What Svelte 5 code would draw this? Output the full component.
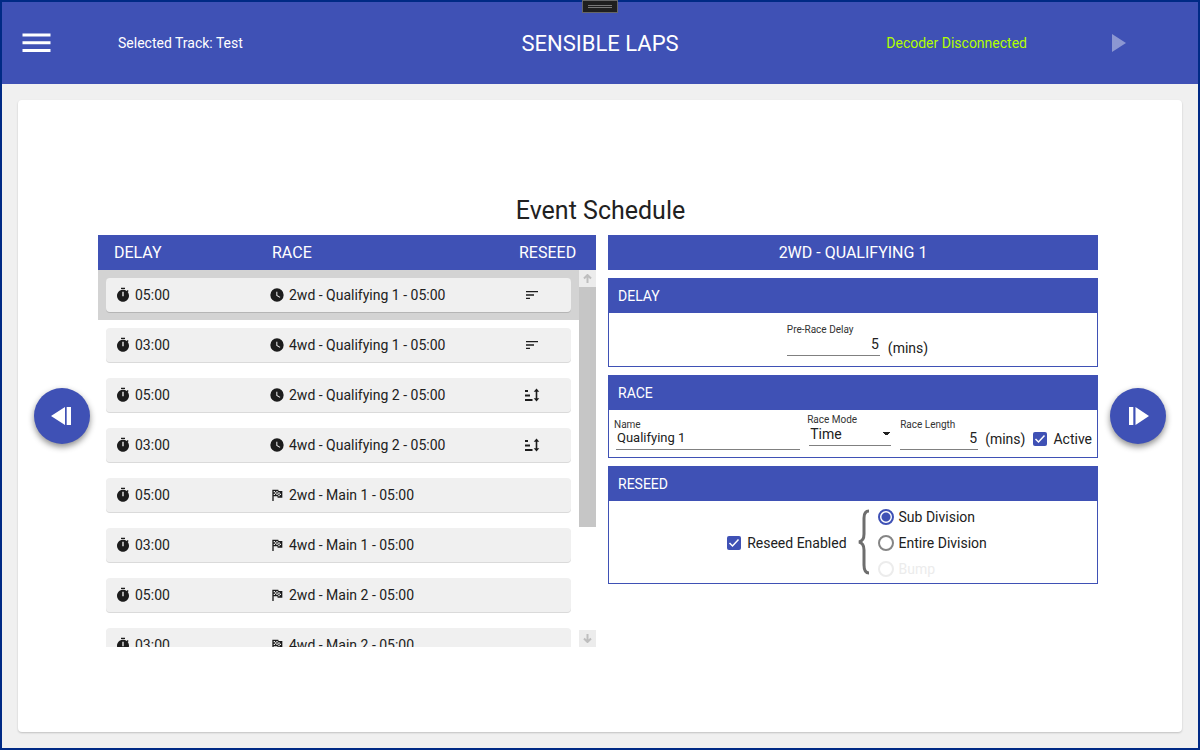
<script lang="ts">
  type Reseed = 'keep' | 'sort' | '';

  let races: { delay: string; icon: 'clock' | 'flag'; name: string; reseed: Reseed }[] = [
    { delay: '05:00', icon: 'clock', name: '2wd - Qualifying 1 - 05:00', reseed: 'keep' },
    { delay: '03:00', icon: 'clock', name: '4wd - Qualifying 1 - 05:00', reseed: 'keep' },
    { delay: '05:00', icon: 'clock', name: '2wd - Qualifying 2 - 05:00', reseed: 'sort' },
    { delay: '03:00', icon: 'clock', name: '4wd - Qualifying 2 - 05:00', reseed: 'sort' },
    { delay: '05:00', icon: 'flag', name: '2wd - Main 1 - 05:00', reseed: '' },
    { delay: '03:00', icon: 'flag', name: '4wd - Main 1 - 05:00', reseed: '' },
    { delay: '05:00', icon: 'flag', name: '2wd - Main 2 - 05:00', reseed: '' },
    { delay: '03:00', icon: 'flag', name: '4wd - Main 2 - 05:00', reseed: '' },
  ];

  let selected = 0;
  let preDelay = '5';
  let raceName = 'Qualifying 1';
  let mode = 'Time';
  let raceLength = '5';
  let active = true;
  let reseedEnabled = true;
  let reseedBy = 'sub';
  let tbody: HTMLElement;

  function scrollList(amount: number) {
    tbody.scrollBy({ top: amount, behavior: 'smooth' });
  }
</script>

<div class="window">
  <div class="grip"><span></span></div>

  <header>
    <div class="side">
      <button class="menu" aria-label="Menu">
        <svg viewBox="0 0 29 20" width="29" height="20" fill="#fff">
          <path d="M.5.5h28v3H.5zM.5 8.2h28v3H.5zM.5 16h28v3H.5z" />
        </svg>
      </button>
      <span class="track">Selected Track: Test</span>
    </div>
    <div class="brand">SENSIBLE LAPS</div>
    <div class="side right">
      <span class="decoder">Decoder Disconnected</span>
      <button class="play" aria-label="Start" disabled>
        <svg viewBox="0 0 14 18" width="14" height="18"><path d="M0 0L14 9L0 18z" fill="#fff" /></svg>
      </button>
    </div>
  </header>

  <main>
    <button class="fab" aria-label="Previous">
      <svg viewBox="0 0 22 18" width="22" height="18" fill="#fff"><path d="M14 0v18L0 9zM15.7 0h4.3v18h-4.3z" /></svg>
    </button>

    <section class="content">
      <h1>Event Schedule</h1>

      <div class="columns">
        <div class="schedule">
          <table>
            <thead>
              <tr><th>DELAY</th><th>RACE</th><th>RESEED</th></tr>
            </thead>
            <tbody bind:this={tbody}>
              {#each races as race, i}
                <tr class:selected={i === selected} on:click={() => (selected = i)}>
                  <td>
                    <svg class="icon" viewBox="0 0 24 24"><path d="M19.03 7.39L20.45 5.97C20 5.46 19.55 5 19.04 4.56L17.62 6C16.07 4.74 14.12 4 12 4C7.03 4 3 8.03 3 13S7.03 22 12 22C17 22 21 17.97 21 13C21 10.88 20.26 8.93 19.03 7.39M13 14H11V7H13V14M15 1H9V3H15V1Z" /></svg>
                    {race.delay}
                  </td>
                  <td>
                    {#if race.icon === 'clock'}
                      <svg class="icon" viewBox="0 0 24 24"><path d="M12 2A10 10 0 0 0 2 12A10 10 0 0 0 12 22A10 10 0 0 0 22 12A10 10 0 0 0 12 2M16.2 16.2L11 13V7H12.5V12.2L17 14.9L16.2 16.2Z" /></svg>
                    {:else}
                      <svg class="icon" viewBox="0 0 24 24"><path d="M14.4 6H20V16H13L12.6 14H7V21H5V4H14L14.4 6M14 14H16V12H18V10H16V8H14V10L13 8V6H11V8H9V6H7V8H9V10H7V12H9V10H11V12H13V10L14 12V14M11 10V8H13V10H11M14 10H16V12H14V10Z" /></svg>
                    {/if}
                    {race.name}
                  </td>
                  <td>
                    {#if race.reseed === 'keep'}
                      <svg class="icon" viewBox="0 0 24 24"><path d="M3 13H15V11H3M3 6V8H21V6M3 18H9V16H3V18Z" /></svg>
                    {:else if race.reseed === 'sort'}
                      <svg class="icon" viewBox="0 0 16 16"><path d="M1 3h3v2H1zM1 7.5h5v2H1zM1 12h7.5v2H1zM12.5 1.500L15.300 4.800H13.300V11.200H15.300L12.500 14.500L9.700 11.200H11.700V4.800H9.700z" /></svg>
                    {/if}
                  </td>
                </tr>
              {/each}
            </tbody>
          </table>
          <div class="scrollbar">
            <button aria-label="Scroll up" on:click={() => scrollList(-50)}>
              <svg viewBox="0 0 9 9" width="9" height="9"><path d="M4.5 9V1M1 4.5L4.5 1L8 4.5" /></svg>
            </button>
            <div class="rail"><div class="thumb"></div></div>
            <button aria-label="Scroll down" on:click={() => scrollList(50)}>
              <svg viewBox="0 0 9 9" width="9" height="9"><path d="M4.5 0V8M1 4.5L4.5 8L8 4.5" /></svg>
            </button>
          </div>
        </div>

        <form class="details" on:submit|preventDefault>
          <h2>2WD - QUALIFYING 1</h2>

          <section class="panel">
            <h3>DELAY</h3>
            <div class="body delay">
              <label class="field">
                <span>Pre-Race Delay</span>
                <input class="number" type="text" bind:value={preDelay} />
              </label>
              <span class="unit">(mins)</span>
            </div>
          </section>

          <section class="panel">
            <h3>RACE</h3>
            <div class="body race">
              <label class="field name">
                <span>Name</span>
                <input type="text" bind:value={raceName} />
              </label>
              <label class="field mode">
                <span>Race Mode</span>
                <select bind:value={mode}>
                  <option>Time</option>
                  <option>Laps</option>
                </select>
              </label>
              <label class="field length">
                <span>Race Length</span>
                <input class="number" type="text" bind:value={raceLength} />
              </label>
              <span class="unit">(mins)</span>
              <label class="check"><input type="checkbox" bind:checked={active} />Active</label>
            </div>
          </section>

          <section class="panel">
            <h3>RESEED</h3>
            <div class="body reseed">
              <label class="check"><input type="checkbox" bind:checked={reseedEnabled} />Reseed Enabled</label>
              <svg class="brace" viewBox="0 0 12 66" width="12" height="66">
                <path d="M11 2C7 2 6 5 6 9V25C6 29 5 32 1 33C5 34 6 37 6 41V56C6 61 7 64 11 64" />
              </svg>
              <div class="radios">
                <label><input type="radio" name="reseed" value="sub" bind:group={reseedBy} />Sub Division</label>
                <label><input type="radio" name="reseed" value="entire" bind:group={reseedBy} />Entire Division</label>
                <label class="off"><input type="radio" name="reseed" value="bump" bind:group={reseedBy} disabled />Bump</label>
              </div>
            </div>
          </section>
        </form>
      </div>
    </section>

    <button class="fab" aria-label="Next">
      <svg viewBox="0 0 22 18" width="22" height="18" fill="#fff"><path d="M2 0h4.3v18H2zM8.500 0L22 9L8.500 18z" /></svg>
    </button>
  </main>
</div>

<style>
  :global(body) {
    margin: 0;
  }

  .window {
    position: relative;
    display: flex;
    flex-direction: column;
    box-sizing: border-box;
    min-height: 100vh;
    border: 2px solid #002a85;
    background: #f0f0f0;
    color: #212121;
    font-family: Roboto, sans-serif;
    font-size: 14px;
    line-height: 18px;
  }

  button {
    display: flex;
    align-items: center;
    justify-content: center;
    padding: 0;
    border: none;
    background: none;
    cursor: pointer;
  }

  .grip {
    position: absolute;
    top: -2px;
    left: 50%;
    transform: translateX(-50%);
    box-sizing: border-box;
    width: 36px;
    height: 13px;
    padding: 4px 5px;
    border: 1px solid #666;
    background: #1f1f1f;
  }

  .grip span {
    display: block;
    height: 1px;
    border: solid #777;
    border-width: 1px 0;
  }

  header {
    display: grid;
    grid-template-columns: 1fr auto 1fr;
    align-items: center;
    height: 82px;
    background: #3f51b5;
    color: #fff;
  }

  .side {
    display: flex;
    align-items: center;
    padding-left: 20px;
  }

  .track {
    margin-left: 67px;
  }

  .brand {
    padding-top: 2px;
    font-size: 22px;
    line-height: 28px;
  }

  .right {
    justify-content: flex-end;
    padding: 0 72px 0 0;
  }

  .decoder {
    margin-right: 85px;
    color: #b2ff00;
  }

  .play {
    opacity: 0.4;
  }

  main {
    flex: 1;
    display: flex;
    align-items: center;
    margin: 16px;
    padding: 0 16px;
    border-radius: 4px;
    background: #fff;
    box-shadow: 0 1px 2px rgba(0, 0, 0, 0.2);
  }

  .fab {
    flex: none;
    width: 56px;
    height: 56px;
    border-radius: 50%;
    background: #3f51b5;
    box-shadow: 0 3px 6px rgba(0, 0, 0, 0.45);
  }

  .content {
    flex: 1;
    margin: 0 12px 0 8px;
  }

  h1 {
    margin: 0;
    padding: 2px 0 0 5px;
    font-size: 25px;
    font-weight: 400;
    line-height: 48px;
    text-align: center;
  }

  .columns {
    display: grid;
    grid-template-columns: 498fr 490fr;
    gap: 12px;
  }

  .schedule {
    display: grid;
    grid-template-columns: 1fr 17px;
    grid-template-rows: 35px 377px;
  }

  table {
    display: contents;
  }

  thead {
    display: block;
    grid-column: 1 / -1;
    background: #3f51b5;
    color: #fff;
  }

  tbody {
    display: block;
    overflow-y: auto;
    scrollbar-width: none;
  }

  tr {
    display: grid;
    grid-template-columns: 155px 1fr 60px;
    padding: 8px;
  }

  thead tr {
    grid-template-columns: 158px 1fr 61px;
    padding: 0 16px;
  }

  th {
    padding: 0;
    font-size: 16px;
    font-weight: 400;
    line-height: 35px;
    text-align: left;
  }

  tr.selected {
    background: #d3d3d3;
  }

  td {
    display: flex;
    align-items: center;
    gap: 4px;
    height: 34px;
    padding: 0 0 0 8px;
    background: #f0f0f0;
    box-shadow: 0 1px 0 #dadada;
  }

  .selected td {
    box-shadow: 0 1px 0 #b5b5b5;
  }

  td:first-child {
    padding-left: 9px;
    border-radius: 4px 0 0 4px;
  }

  td:last-child {
    padding-left: 13px;
    border-radius: 0 4px 4px 0;
  }

  .icon {
    flex: none;
    width: 16px;
    height: 16px;
    fill: #1c1c1c;
  }

  .scrollbar {
    display: flex;
    flex-direction: column;
  }

  .scrollbar button {
    height: 17px;
    background: #ececec;
  }

  .scrollbar svg {
    fill: none;
    stroke: #bebebe;
    stroke-width: 2;
  }

  .rail {
    flex: 1;
  }

  .thumb {
    height: 70%;
    background: #c6c6c6;
  }

  .details {
    display: flex;
    flex-direction: column;
    gap: 8px;
  }

  h2,
  h3 {
    margin: 0;
    background: #3f51b5;
    color: #fff;
    font-weight: 400;
  }

  h2 {
    font-size: 16px;
    line-height: 35px;
    text-align: center;
  }

  h3 {
    padding: 2px 0 0 10px;
    font-size: 14px;
    line-height: 33px;
  }

  .body {
    display: flex;
    box-sizing: border-box;
    border: 1px solid #3f51b5;
    border-top: none;
  }

  .field {
    display: flex;
    flex-direction: column;
  }

  .field span {
    font-size: 10px;
    line-height: 12px;
    color: #333;
  }

  .field input,
  .field select {
    box-sizing: border-box;
    width: 100%;
    height: 20px;
    margin: 0;
    padding: 0 0 3px;
    border: none;
    border-bottom: 1px solid #808080;
    border-radius: 0;
    outline: none;
    background: none;
    color: #212121;
    font: 14px/16px Roboto, sans-serif;
  }

  .field .number {
    padding-right: 1px;
    text-align: right;
  }

  .delay {
    justify-content: center;
    gap: 8px;
    padding: 11px 0 10px 9px;
  }

  .delay .field {
    width: 93px;
  }

  .unit {
    align-self: flex-end;
  }

  .delay .unit {
    line-height: 16px;
  }

  .race {
    align-items: flex-end;
    padding: 4px 5px 7px 5px;
  }

  .race .field input {
    height: 19px;
    padding-bottom: 5px;
  }

  .field.name {
    flex: 1;
  }

  .field.name input {
    width: auto;
    margin-left: 2px;
    padding-left: 1px;
    font-size: 13px;
  }

  .field.mode {
    width: 84px;
    margin: 0 9px 4px 7px;
  }

  .field.mode select {
    width: auto;
    margin-left: 2px;
    padding-left: 1px;
    appearance: none;
    background: linear-gradient(to bottom right, #212121 50%, transparent 50%) right 0 top 6px / 4px 4px no-repeat,
      linear-gradient(to bottom left, #212121 50%, transparent 50%) right 4px top 6px / 4px 4px no-repeat;
  }

  .field.length {
    width: 78px;
  }

  .race .unit {
    margin: 0 8px 2px 7px;
  }

  .race .check {
    margin-bottom: 2px;
  }

  .check,
  .radios label {
    display: flex;
    align-items: center;
    gap: 6px;
  }

  input[type='checkbox'] {
    appearance: none;
    width: 14px;
    height: 14px;
    margin: 0;
    border-radius: 2px;
    box-shadow: inset 0 0 0 2px #757575;
  }

  input[type='checkbox']:checked {
    background: #3f51b5 url("data:image/svg+xml,%3Csvg xmlns='http://www.w3.org/2000/svg' viewBox='0 0 14 14'%3E%3Cpath d='M2.5 7L5.5 10L11.5 3.5' fill='none' stroke='white' stroke-width='1.5'/%3E%3C/svg%3E");
    box-shadow: none;
  }

  .reseed {
    align-items: center;
    justify-content: center;
    padding: 3px 0 1px 8px;
  }

  .brace {
    margin: 0 8px 2px 11px;
    fill: none;
    stroke: #6e6e6e;
    stroke-width: 3;
  }

  .radios label {
    gap: 5px;
    height: 26px;
  }

  input[type='radio'] {
    appearance: none;
    box-sizing: border-box;
    width: 16px;
    height: 16px;
    margin: 0;
    border: 2px solid #858585;
    border-radius: 50%;
  }

  input[type='radio']:checked {
    border-color: #3f51b5;
    background: radial-gradient(circle, #3f51b5 4px, transparent 5px);
  }

  .radios .off {
    color: #ececec;
  }

  .off input[type='radio'] {
    border-color: #ececec;
  }
</style>
